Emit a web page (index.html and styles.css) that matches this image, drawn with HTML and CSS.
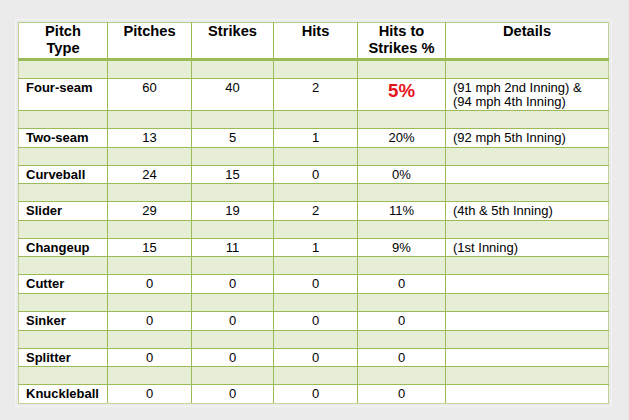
FILE: index.html
```html
<!DOCTYPE html>
<html>
<head>
<meta charset="utf-8">
<link rel="stylesheet" href="styles.css">
</head>
<body>
<div class="page">
  <div class="frame">
    <table class="stats">
      <colgroup>
        <col class="c1"><col class="c2"><col class="c3"><col class="c4"><col class="c5"><col class="c6">
      </colgroup>
      <thead>
        <tr class="head">
          <th>Pitch<br>Type</th>
          <th>Pitches</th>
          <th>Strikes</th>
          <th>Hits</th>
          <th>Hits to<br>Strikes %</th>
          <th>Details</th>
        </tr>
      </thead>
      <tbody>
        <tr class="gap"><td></td><td></td><td></td><td></td><td></td><td></td></tr>
        <tr class="row tall"><td class="name">Four-seam</td><td>60</td><td>40</td><td>2</td><td class="hot">5%</td><td class="det">(91 mph 2nd Inning) &amp;<br>(94 mph 4th Inning)</td></tr>
        <tr class="gap"><td></td><td></td><td></td><td></td><td></td><td></td></tr>
        <tr class="row"><td class="name">Two-seam</td><td>13</td><td>5</td><td>1</td><td>20%</td><td class="det">(92 mph 5th Inning)</td></tr>
        <tr class="gap"><td></td><td></td><td></td><td></td><td></td><td></td></tr>
        <tr class="row"><td class="name">Curveball</td><td>24</td><td>15</td><td>0</td><td>0%</td><td class="det"></td></tr>
        <tr class="gap"><td></td><td></td><td></td><td></td><td></td><td></td></tr>
        <tr class="row"><td class="name">Slider</td><td>29</td><td>19</td><td>2</td><td>11%</td><td class="det">(4th &amp; 5th Inning)</td></tr>
        <tr class="gap"><td></td><td></td><td></td><td></td><td></td><td></td></tr>
        <tr class="row"><td class="name">Changeup</td><td>15</td><td>11</td><td>1</td><td>9%</td><td class="det">(1st Inning)</td></tr>
        <tr class="gap"><td></td><td></td><td></td><td></td><td></td><td></td></tr>
        <tr class="row"><td class="name">Cutter</td><td>0</td><td>0</td><td>0</td><td>0</td><td class="det"></td></tr>
        <tr class="gap"><td></td><td></td><td></td><td></td><td></td><td></td></tr>
        <tr class="row"><td class="name">Sinker</td><td>0</td><td>0</td><td>0</td><td>0</td><td class="det"></td></tr>
        <tr class="gap"><td></td><td></td><td></td><td></td><td></td><td></td></tr>
        <tr class="row"><td class="name">Splitter</td><td>0</td><td>0</td><td>0</td><td>0</td><td class="det"></td></tr>
        <tr class="gap"><td></td><td></td><td></td><td></td><td></td><td></td></tr>
        <tr class="row"><td class="name">Knuckleball</td><td>0</td><td>0</td><td>0</td><td>0</td><td class="det"></td></tr>
      </tbody>
    </table>
  </div>
</div>
</body>
</html>
```

FILE: styles.css
```css
html, body {
  margin: 0;
  padding: 0;
  background: #ebebeb;
}

.page {
  padding: 19px 0 0 15px;
}

.frame {
  display: inline-block;
  padding: 2px;
  border: 1px solid #f3f3f3;
}

.stats {
  border-collapse: collapse;
  table-layout: fixed;
  width: 590px;
  font-family: "Liberation Sans", Arial, sans-serif;
  color: #000;
  background: #fff;
}

.c1 { width: 89px; }
.c2 { width: 84px; }
.c3 { width: 82px; }
.c4 { width: 84px; }
.c5 { width: 88px; }
.c6 { width: 163px; }

.stats th,
.stats td {
  border: 1px solid #9bbb59;
  padding: 0 7px;
  vertical-align: top;
  text-align: center;
}

.stats th:first-child,
.stats td:first-child {
  border-left-color: #bfd393;
}

.stats th:last-child,
.stats td:last-child {
  border-right-color: #bfd393;
}

.head th {
  border-top-color: #b5cb88;
  border-bottom: 3px solid #9bbb59;
  font-size: 14.67px;
  font-weight: bold;
  line-height: 17px;
  height: 35px;
  padding-top: 0;
}

.gap td {
  background: #e6eed5;
  height: 17px;
  padding: 0;
}

.row td {
  font-size: 13px;
  line-height: 15px;
  height: 16.6px;
  padding-top: 1px;
  padding-bottom: 0;
}

.row.tall td {
  height: 29px;
  line-height: 14px;
  padding-top: 2px;
}

.stats td.name {
  text-align: left;
  font-weight: bold;
}

.stats td.det {
  text-align: left;
}

.stats td.hot {
  color: #e5141c;
  font-weight: bold;
  font-size: 18.67px;
  line-height: 18px;
  padding-top: 3px;
  height: 28px;
}

.stats tr:last-child td {
  border-bottom-color: #bfd393;
}
```
